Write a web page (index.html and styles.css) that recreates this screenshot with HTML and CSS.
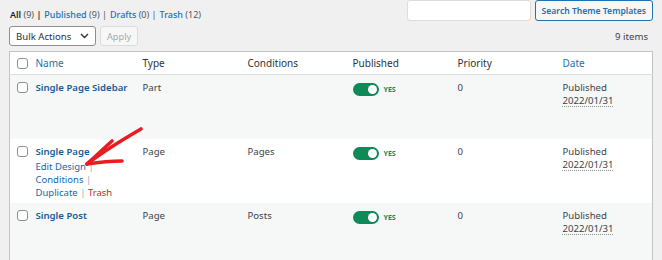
FILE: index.html
```html
<!DOCTYPE html>
<html lang="en">
<head>
  <meta charset="UTF-8">
  <title>Theme Templates</title>
  <link rel="stylesheet" href="styles.css">
</head>
<body>
  <div class="wrap">
    <div class="topbar">
      <ul class="subsubsub">
        <li class="current">All <span class="count">(9)</span> |</li>
        <li><a href="#">Published</a> <span class="count">(9)</span> |</li>
        <li><a href="#">Drafts</a> <span class="count">(0)</span> |</li>
        <li><a href="#">Trash</a> <span class="count">(12)</span></li>
      </ul>
      <div class="search-box">
        <input type="search" class="search-input">
        <button class="button">Search Theme Templates</button>
      </div>
    </div>

    <div class="tablenav">
      <div class="bulk">
        <div class="select">Bulk Actions
          <svg width="9" height="6" viewBox="0 0 9 6"><path d="M1 1l3.5 3.5L8 1" fill="none" stroke="#2c3338" stroke-width="1.4"/></svg>
        </div>
        <button class="button disabled">Apply</button>
      </div>
      <div class="num-items">9 items</div>
    </div>

    <table class="list-table">
      <colgroup>
        <col class="col-cb"><col class="col-name"><col class="col-std"><col class="col-std"><col class="col-std"><col class="col-std"><col>
      </colgroup>
      <thead>
        <tr>
          <td class="cb"><span class="checkbox"></span></td>
          <th><a href="#">Name</a></th>
          <th>Type</th>
          <th>Conditions</th>
          <th>Published</th>
          <th>Priority</th>
          <th><a href="#">Date</a></th>
        </tr>
      </thead>
      <tbody>
        <tr class="alt">
          <td class="cb"><span class="checkbox"></span></td>
          <td><a class="row-title" href="#">Single Page Sidebar</a></td>
          <td>Part</td>
          <td></td>
          <td><span class="toggle"><span class="knob"></span></span><span class="yes">YES</span></td>
          <td>0</td>
          <td>Published<br><abbr>2022/01/31</abbr></td>
        </tr>
        <tr>
          <td class="cb"><span class="checkbox"></span></td>
          <td>
            <a class="row-title" href="#">Single Page</a>
            <div class="row-actions">
              <div><a href="#">Edit Design</a> <span class="sep">|</span></div>
              <div><a href="#">Conditions</a> <span class="sep">|</span></div>
              <div><a href="#">Duplicate</a> <span class="sep">|</span> <a class="trash" href="#">Trash</a></div>
            </div>
          </td>
          <td>Page</td>
          <td>Pages</td>
          <td><span class="toggle"><span class="knob"></span></span><span class="yes">YES</span></td>
          <td>0</td>
          <td>Published<br><abbr>2022/01/31</abbr></td>
        </tr>
        <tr class="alt">
          <td class="cb"><span class="checkbox"></span></td>
          <td><a class="row-title" href="#">Single Post</a></td>
          <td>Page</td>
          <td>Posts</td>
          <td><span class="toggle"><span class="knob"></span></span><span class="yes">YES</span></td>
          <td>0</td>
          <td>Published<br><abbr>2022/01/31</abbr></td>
        </tr>
      </tbody>
    </table>
  </div>

  <!-- hand-drawn annotation arrow -->
  <svg class="arrow" width="662" height="260" viewBox="0 0 662 260">
    <g fill="none" stroke="#ea1c20" stroke-width="3.6" stroke-linecap="round" stroke-linejoin="round">
      <path d="M141 129 C 122 140, 104 151, 87 164"/>
      <path d="M87 164 L 112 141"/>
      <path d="M87 164 C 100 162, 110 161, 122 161"/>
    </g>
  </svg>
</body>
</html>
```

FILE: styles.css
```css
body {
  margin: 0;
  background: #f0f0f1;
  font-family: "Noto Sans", sans-serif;
  font-size: 9.6px;
  color: #3c434a;
  overflow: hidden;
}

a {
  color: #2271b1;
  text-decoration: none;
}

.wrap {
  padding: 0 9px;
  position: relative;
}

.topbar {
  display: flex;
  justify-content: space-between;
  align-items: flex-start;
  height: 22px;
}

.subsubsub {
  list-style: none;
  margin: 0;
  padding: 8px 0 0 1px;
  display: flex;
  gap: 3px;
  font-size: 9px;
  color: #50575e;
}

.subsubsub .current {
  color: #1d2327;
  font-weight: 600;
}

.subsubsub .current .count {
  font-weight: 400;
  color: #50575e;
}

.subsubsub a {
  font-weight: 500;
}

.search-box {
  display: flex;
  gap: 4px;
}

.search-input {
  box-sizing: border-box;
  width: 124px;
  height: 21px;
  border: 1px solid #dcdcde;
  border-radius: 3px;
  background: #fff;
  margin: 0;
}

.button {
  box-sizing: border-box;
  height: 21px;
  padding: 0 6px;
  border: 1px solid #2271b1;
  border-radius: 3px;
  background: #f6f7f7;
  color: #2271b1;
  font-family: "Noto Sans", sans-serif;
  font-size: 8.6px;
  font-weight: 600;
}

.button.disabled {
  height: 20px;
  border-color: #dcdcde;
  color: #a7aaad;
  font-size: 9.2px;
  font-weight: 400;
  padding: 0 6px;
}

.tablenav {
  display: flex;
  justify-content: space-between;
  align-items: center;
  margin-top: 4px;
  height: 20px;
}

.bulk {
  display: flex;
  gap: 4px;
}

.select {
  box-sizing: border-box;
  width: 87px;
  height: 20px;
  padding: 0 6px;
  display: flex;
  align-items: center;
  justify-content: space-between;
  border: 1px solid #8c8f94;
  border-radius: 3px;
  background: #fff;
  color: #2c3338;
  font-size: 9.6px;
}

.num-items {
  padding-right: 5px;
  color: #3c434a;
}

.list-table {
  margin-top: 5px;
  width: 644px;
  border-collapse: collapse;
  table-layout: fixed;
  background: #fff;
  border: 1px solid #c3c4c7;
}

.col-cb { width: 26px; }
.col-name { width: 107px; }
.col-std { width: 105px; }

.list-table th,
.list-table td {
  text-align: left;
  vertical-align: top;
  padding: 7px 0 0 0;
  font-weight: 400;
  line-height: 12.5px;
}

.list-table tbody td {
  height: 57px;
}

.list-table thead th,
.list-table thead td {
  height: 16px;
  padding-top: 5px;
  border-bottom: 1px solid #dcdcde;
  color: #2c3338;
  font-size: 10px;
}

.list-table thead td.cb {
  padding-top: 6px;
}

.list-table td.cb {
  padding-left: 7px;
  padding-top: 7px;
}

.checkbox {
  display: block;
  box-sizing: border-box;
  width: 11px;
  height: 11px;
  border: 1px solid #8c8f94;
  border-radius: 3px;
  background: #fff;
}

.list-table tr.alt {
  background: #f6f7f7;
}

.row-title {
  font-size: 9.6px;
  font-weight: 600;
  color: #135e96;
}

.row-actions {
  margin-top: 1px;
  line-height: 13px;
  font-size: 9.5px;
}

.row-actions a {
  color: #1a66a6;
}

.row-actions .sep {
  color: #a7aaad;
}

.row-actions a.trash {
  color: #c22a2b;
}

.toggle {
  display: inline-block;
  vertical-align: top;
  width: 26px;
  height: 13px;
  margin-top: 1px;
  border-radius: 7px;
  background: #0d8a55;
  position: relative;
}

.knob {
  position: absolute;
  right: 2px;
  top: 2px;
  width: 9px;
  height: 9px;
  border-radius: 50%;
  background: #fff;
}

.yes {
  display: inline-block;
  margin: 4px 0 0 5px;
  font-size: 7px;
  line-height: 7px;
  font-weight: 700;
  color: #0d8a55;
}

abbr {
  text-decoration: underline dotted #8c8f94;
  text-underline-offset: 2px;
}

.arrow {
  position: absolute;
  left: 0;
  top: 0;
  pointer-events: none;
}
```
